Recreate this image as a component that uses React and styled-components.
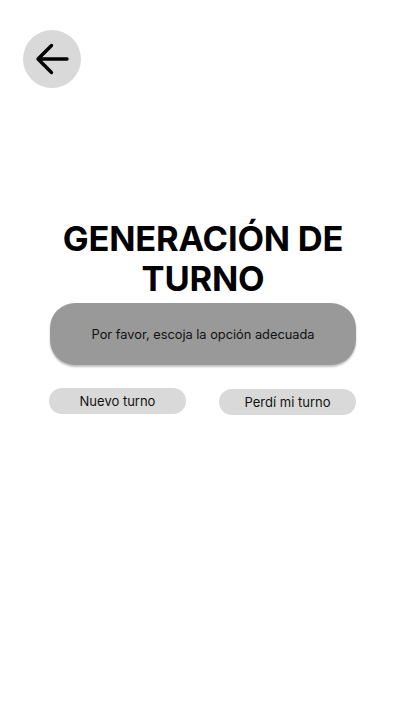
import React from "react";
import styled, { createGlobalStyle } from "styled-components";

const Global = createGlobalStyle`
  body {
    margin: 0;
    background: #fff;
    font-family: Inter, "Noto Sans", sans-serif;
  }
`;

export default function App() {
  return (
    <Page>
      <Global />
      <TopBar>
        <BackButton aria-label="Volver">
          <svg width="36" height="36" viewBox="0 0 36 36" fill="none">
            <path
              d="M33 18H4M17.5 4.5L4 18l13.5 13.5"
              stroke="#000"
              strokeWidth="3.4"
              strokeLinecap="round"
              strokeLinejoin="round"
            />
          </svg>
        </BackButton>
      </TopBar>
      <Content>
        <Title>GENERACIÓN DE TURNO</Title>
        <Notice>Por favor, escoja la opción adecuada</Notice>
        <Actions>
          <Choice>Nuevo turno</Choice>
          <Choice $offset>Perdí mi turno</Choice>
        </Actions>
      </Content>
    </Page>
  );
}

const Page = styled.main`
  width: 405px;
  height: 724px;
  display: flex;
  flex-direction: column;
`;

const TopBar = styled.div`
  padding: 30px 0 0 23px;
`;

const BackButton = styled.button`
  width: 58px;
  height: 58px;
  border-radius: 50%;
  border: none;
  background: #d9d9d9;
  display: flex;
  align-items: center;
  justify-content: center;
  padding: 0 1px 0 0;
`;

const Content = styled.section`
  display: flex;
  flex-direction: column;
  align-items: center;
  padding: 131px 49px 0 50px;
`;

const Title = styled.h1`
  margin: 0;
  width: 290px;
  text-align: center;
  font-size: 34.5px;
  font-weight: 700;
  line-height: 40px;
  color: #000;
  letter-spacing: -0.2px;
`;

const Notice = styled.div`
  margin-top: 4px;
  align-self: stretch;
  height: 62px;
  border-radius: 25px;
  background: #999999;
  box-shadow: 0 2px 2px rgba(0, 0, 0, 0.25);
  display: flex;
  align-items: center;
  justify-content: center;
  font-size: 12.8px;
  color: #111;
`;

const Actions = styled.div`
  margin-top: 23px;
  margin-left: -1px;
  align-self: stretch;
  display: flex;
  justify-content: space-between;
`;

const Choice = styled.button`
  width: 137px;
  height: 26px;
  margin-top: ${(p) => (p.$offset ? "1px" : "0")};
  border: none;
  border-radius: 13px;
  background: #d9d9d9;
  font-family: Inter, sans-serif;
  font-size: 13px;
  color: #111;
  padding: 0;
`;
